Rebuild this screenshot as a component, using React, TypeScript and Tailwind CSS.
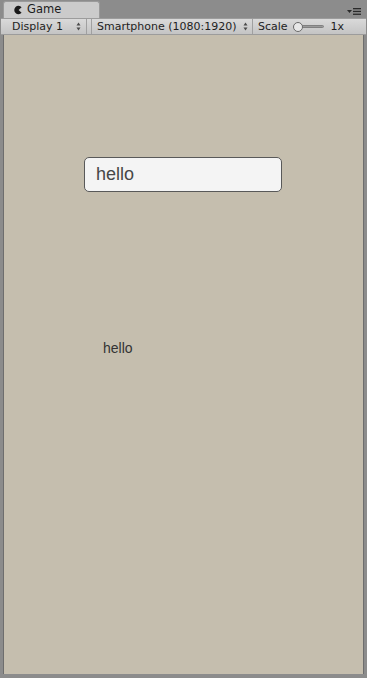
import React from 'react';

function Arrows() {
  return (
    <svg width="5" height="9" viewBox="0 0 5 9" className="shrink-0">
      <path d="M2.5 0.5 L4.5 3.5 H0.5 Z" fill="#4a4a4a" />
      <path d="M2.5 8.5 L4.5 5.5 H0.5 Z" fill="#4a4a4a" />
    </svg>
  );
}

export default function App() {
  const font = { fontFamily: '"DejaVu Sans", "Liberation Sans", sans-serif' };
  return (
    <div className="w-[367px] h-[678px] bg-[#8c8c8c] flex flex-col overflow-hidden" style={font}>
      {/* tab strip */}
      <div className="h-[18px] flex items-end relative">
        <div className="ml-[3px] w-[97px] h-[17px] bg-[#cbcbcb] rounded-t-[3px] border border-b-0 border-[#9a9a9a] flex items-center pl-[9px] gap-[4px]">
          <svg width="10" height="10" viewBox="0 0 10 10">
            <path d="M8.6 2.2 A4.2 4.2 0 1 0 8.6 7.8 L5.6 5 Z" fill="#1a1a1a" />
          </svg>
          <span className="text-[11.5px] text-[#1c1c1c] leading-none">Game</span>
        </div>
        <div className="absolute right-[6px] top-[8px] flex items-center gap-[1px]">
          <svg width="5" height="4" viewBox="0 0 5 4"><path d="M0 0 H5 L2.5 3 Z" fill="#2a2a2a" /></svg>
          <svg width="8" height="7" viewBox="0 0 8 7">
            <rect x="0" y="0" width="8" height="1.3" fill="#2a2a2a" />
            <rect x="0" y="2.8" width="8" height="1.3" fill="#2a2a2a" />
            <rect x="0" y="5.6" width="8" height="1.3" fill="#2a2a2a" />
          </svg>
        </div>
      </div>

      {/* toolbar */}
      <div className="h-[17px] mx-[1px] bg-gradient-to-b from-[#dadada] to-[#c4c4c4] border-y border-[#9c9c9c] flex items-center text-[11px] text-[#1e1e1e] leading-none">
        <div className="w-[86px] h-full flex items-center justify-between pl-[11px] pr-[5px] border-r border-[#a0a0a0]">
          <span>Display 1</span>
          <Arrows />
        </div>
        <div className="w-[5px] h-full border-r border-[#a0a0a0]" />
        <div className="w-[161px] h-full flex items-center justify-between pl-[5px] pr-[4px] border-r border-[#a0a0a0]">
          <span>Smartphone (1080:1920)</span>
          <Arrows />
        </div>
        <div className="flex-1 h-full flex items-center pl-[5px] gap-[5px]">
          <span>Scale</span>
          <div className="relative w-[31px] h-[10px] flex items-center">
            <div className="w-full h-[3px] bg-[#9a9a9a] rounded-full border border-[#808080]" />
            <div className="absolute left-0 w-[10px] h-[10px] rounded-full bg-[#e8e8e8] border border-[#6a6a6a]" />
          </div>
          <span className="ml-[2px]">1x</span>
        </div>
      </div>

      {/* game view */}
      <div className="flex-1 mx-[3px] mb-[4px] bg-[#c5beae] border-x border-[#6e6e6e] flex flex-col">
        <div className="mt-[122px] ml-[80px] w-[198px] h-[35px] rounded-[5px] border border-[#595959] bg-[#f4f4f4] flex items-center pl-[11px]">
          <span className="text-[18px] text-[#474747]" style={{ fontFamily: '"Liberation Sans", Arial, sans-serif' }}>hello</span>
        </div>
        <div className="mt-[149px] ml-[99px] text-[14px] text-[#333333] leading-none" style={{ fontFamily: '"Liberation Sans", Arial, sans-serif' }}>
          hello
        </div>
      </div>
    </div>
  );
}
